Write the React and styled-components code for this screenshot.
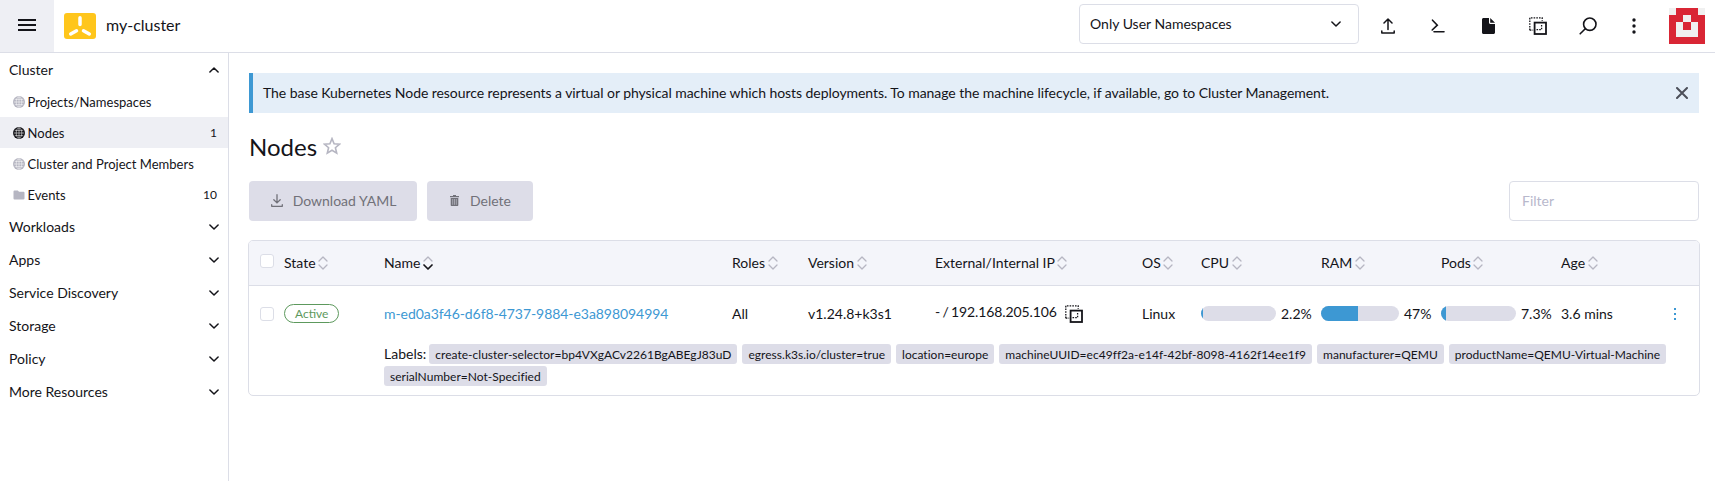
import React from 'react';
import styled, { createGlobalStyle } from 'styled-components';

const Global = createGlobalStyle`
  * { box-sizing: border-box; }
  body { margin: 0; background: #fff; color: #141419; font: 14px/20px Lato, sans-serif; }
  svg { display: block; flex: none; }
`;

const Page = styled.div`
  display: grid;
  grid-template: 53px 428px / 229px 1fr;
  width: 1715px;
  height: 481px;
  overflow: hidden;
`;

/* ---------- header ---------- */
const Header = styled.header`
  grid-column: 1 / -1;
  display: flex;
  align-items: center;
  border-bottom: 1px solid #dcdee7;
`;
const MenuButton = styled.div`
  width: 54px;
  height: 52px;
  display: flex;
  align-items: center;
  justify-content: center;
  padding-bottom: 2px;
  background: #eeeff4;
`;
const Logo = styled.div`
  width: 32px;
  height: 26px;
  margin: 0 10px;
  border-radius: 3px;
  background: #ffc61c;
`;
const ClusterName = styled.div`
  flex: 1;
  font-size: 16px;
  padding-bottom: 2px;
`;
const Select = styled.div`
  width: 280px;
  height: 40px;
  margin-bottom: 4px;
  padding: 0 17px 0 10px;
  display: flex;
  align-items: center;
  justify-content: space-between;
  border: 1px solid #dcdee7;
  border-radius: 4px;
`;
const Actions = styled.div`
  display: flex;
  margin-left: 4px;
`;
const Action = styled.div`
  width: ${(p) => p.$w || 50}px;
  height: 52px;
  display: flex;
  align-items: center;
  justify-content: center;
`;
const Avatar = styled.div`
  margin: 0 10px 0 15px;
`;

/* ---------- side navigation ---------- */
const Nav = styled.nav`
  border-right: 1px solid #dcdee7;
`;
const Group = styled.div`
  height: 33px;
  display: flex;
  align-items: center;
  justify-content: space-between;
  padding: 1px 9px 0 9px;
`;
const Item = styled.div`
  height: 31px;
  display: flex;
  align-items: center;
  gap: 2.5px;
  padding: 1px 11px 0 13px;
  background: ${(p) => (p.$active ? '#eeeff4' : 'transparent')};
  font-size: 13px;
  letter-spacing: 0.02px;
  svg { color: ${(p) => (p.$active ? '#141419' : '#b6b6c2')}; margin-bottom: 1px; }
`;
const ItemLabel = styled.span`
  flex: 1;
  white-space: nowrap;
`;
const Count = styled.span`
  font-size: 12px;
`;

/* ---------- main ---------- */
const Main = styled.main`
  padding: 20px 15px 0 19px;
`;
const Banner = styled.div`
  height: 40px;
  margin-left: 1px;
  margin-right: 1px;
  padding: 0 11px 0 10px;
  display: flex;
  align-items: center;
  justify-content: space-between;
  background: #e4eef8;
  border-left: 4px solid #3d98d3;
  letter-spacing: -0.058px;
`;
const Title = styled.h1`
  margin: 19px 0 0 1px;
  height: 30px;
  display: flex;
  align-items: center;
  gap: 6px;
  font-size: 24px;
  line-height: 30px;
  font-weight: 400;
  svg { margin-bottom: 3px; }
`;
const Toolbar = styled.div`
  display: flex;
  gap: 10px;
  margin: 19px 1px 0;
  height: 40px;
`;
const Button = styled.div`
  width: ${(p) => p.$w}px;
  display: flex;
  align-items: center;
  justify-content: center;
  gap: ${(p) => p.$gap}px;
  padding-left: 1px;
  border-radius: 4px;
  background: #dddde8;
  color: #717179;
  svg { margin-bottom: 1px; }
`;
const Filter = styled.div`
  width: 190px;
  margin-left: auto;
  padding: 9px 12px;
  border: 1px solid #dcdee7;
  border-radius: 4px;
  color: #b8b8cc;
`;

/* ---------- table ---------- */
const Table = styled.section`
  margin-top: 19px;
  height: 156px;
  border: 1px solid #dcdee7;
  border-radius: 5px;
  overflow: hidden;
`;
const Row = styled.div`
  display: grid;
  grid-template-columns: 24px 100px 348px 76px 127px 207px 59px 120px 120px 120px 105px 1fr;
  align-items: center;
  padding-left: 11px;
  height: ${(p) => p.$h}px;
  background: ${(p) => (p.$head ? '#f4f5fa' : '#fff')};
  border-bottom: ${(p) => (p.$head ? '1px solid #dcdee7' : '0')};
`;
const Cell = styled.div`
  display: flex;
  align-items: center;
  gap: ${(p) => p.$gap || 0}px;
  white-space: nowrap;
`;
const Address = styled.span`
  padding-bottom: 3px;
  letter-spacing: -0.1px;
  word-spacing: -1.2px;
`;
const AddressCell = styled(Cell)`
  padding-bottom: 1px;
`;
const Checkbox = styled.div`
  width: 14px;
  height: 14px;
  margin-bottom: ${(p) => p.$lift || 0}px;
  border: 1px solid #dcdee7;
  border-radius: 3px;
  background: #fff;
`;
const Badge = styled.span`
  height: 19px;
  margin-bottom: 1px;
  padding: 0 10px;
  border: 1px solid #5d995d;
  border-radius: 10px;
  color: #5d995d;
  font-size: 12px;
  line-height: 18px;
`;
const Link = styled.a`
  color: #3d98d3;
  letter-spacing: -0.06px;
`;
const Meter = styled.div`
  width: ${(p) => p.$w}px;
  height: 15px;
  margin-bottom: 1px;
  border-radius: 8px;
  overflow: hidden;
  background: #dddde8;
`;
const Fill = styled.div`
  height: 100%;
  background: #3d98d3;
`;
const Labels = styled.div`
  display: flex;
  flex-wrap: wrap;
  gap: 2px 5px;
  padding: 2px 20px 0 135px;
`;
const LabelTitle = styled.span`
  line-height: 19px;
  margin-right: -2px;
`;
const Tag = styled.span`
  height: 20px;
  padding: 0 6px;
  border-radius: 3px;
  background: #dddde8;
  font-size: 12px;
  letter-spacing: 0.022px;
  line-height: 21px;
  white-space: nowrap;
`;

/* ---------- icons ---------- */
const Chevron = ({ up }) => (
  <svg width="10" height="6" viewBox="0 0 10 6" fill="none" stroke="currentColor" strokeWidth="1.5" strokeLinecap="round" strokeLinejoin="round">
    <path d={up ? 'M.9 5 5 1l4.1 4' : 'M.9 1 5 5l4.1-4'} />
  </svg>
);
const Sort = ({ active }) => (
  <svg width="10" height="14" viewBox="0 0 10 14" fill="none" strokeWidth="1.3" strokeLinecap="round" strokeLinejoin="round">
    <path d="M1 5l4-4 4 4" stroke="#b6b6c2" />
    <path d="M1 9l4 4 4-4" stroke={active ? '#141419' : '#b6b6c2'} strokeWidth={active ? 1.7 : 1.3} />
  </svg>
);
const Globe = () => (
  <svg width="12" height="12" viewBox="0 0 12 12">
    <circle cx="6" cy="6" r="6" fill="currentColor" />
    <g fill="none" stroke="#fff" strokeOpacity=".75" strokeWidth=".7">
      <path d="M6 .8v10.4M.8 6h10.4M1.8 3.4h8.4M1.8 8.6h8.4" />
      <ellipse cx="6" cy="6" rx="2.8" ry="5.2" />
    </g>
  </svg>
);
const Folder = () => (
  <svg width="12" height="12" viewBox="0 0 12 12">
    <path d="M1.4 1.5h3.4L6 2.8h4.6c.5 0 .9.4.9.9v5.9c0 .5-.4.9-.9.9H1.4c-.5 0-.9-.4-.9-.9V2.4c0-.5.4-.9.9-.9z" fill="currentColor" />
  </svg>
);
const Copy = () => (
  <svg width="18" height="18" viewBox="0 0 18 18" fill="none" stroke="#141419">
    <path d="M.8 13.2V.8h12.4v3" strokeWidth="1.3" strokeDasharray="1.6 1.1" />
    <path d="M.8 13.2h3.4M7.5 12.6h5.1V7.5" strokeWidth="1.3" strokeDasharray="1.6 1.1" />
    <rect x="5.6" y="5.6" width="11.4" height="11.4" strokeWidth="1.8" />
  </svg>
);

const sections = ['Workloads', 'Apps', 'Service Discovery', 'Storage', 'Policy', 'More Resources'];
const columns = ['State', 'Name', 'Roles', 'Version', 'External/Internal IP', 'OS', 'CPU', 'RAM', 'Pods', 'Age'];
const tags = [
  'create-cluster-selector=bp4VXgACv2261BgABEgJ83uD',
  'egress.k3s.io/cluster=true',
  'location=europe',
  'machineUUID=ec49ff2a-e14f-42bf-8098-4162f14ee1f9',
  'manufacturer=QEMU',
  'productName=QEMU-Virtual-Machine',
  'serialNumber=Not-Specified',
];
const usage = [
  { value: 2.2, width: 75 },
  { value: 47, width: 78 },
  { value: 7.3, width: 75 },
];

export default function App() {
  return (
    <Page>
      <Global />
      <Header>
        <MenuButton>
          <svg width="18" height="12" viewBox="0 0 18 12" fill="#141419">
            <path d="M0 0h18v2H0zM0 5h18v2H0zM0 10h18v2H0z" />
          </svg>
        </MenuButton>
        <Logo>
          <svg width="32" height="26" viewBox="0 0 32 26" stroke="#fff" strokeWidth="3.5" strokeLinecap="round">
            <path d="M16 4.8v6.6M12.5 17.8l-5.8 3.2M19.5 17.8l5.8 3.2" />
          </svg>
        </Logo>
        <ClusterName>my-cluster</ClusterName>
        <Select>
          Only User Namespaces
          <Chevron />
        </Select>
        <Actions>
          <Action>
            <svg width="14" height="16" viewBox="0 0 14 16" fill="none" stroke="#141419" strokeWidth="1.5" strokeLinecap="round" strokeLinejoin="round">
              <path d="M7 11.5V1M3 5l4-4 4 4M.8 13v2h12.4v-2" />
            </svg>
          </Action>
          <Action>
            <svg width="14" height="14" viewBox="0 0 14 14" fill="none" stroke="#141419" strokeWidth="1.6" strokeLinecap="round">
              <path d="M1.5 1.2 6.3 6.2 1.2 11M3 12.8h10" />
            </svg>
          </Action>
          <Action>
            <svg width="13" height="16" viewBox="0 0 13 16" fill="#141419">
              <path d="M1.5 0H7v4.5C7 5.3 7.6 6 8.4 6H13v8.5c0 .8-.7 1.5-1.5 1.5h-10C.7 16 0 15.3 0 14.5v-13C0 .7.7 0 1.5 0zM8.2 0 13 4.8H8.2z" />
            </svg>
          </Action>
          <Action><Copy /></Action>
          <Action>
            <svg width="18" height="18" viewBox="0 0 18 18" fill="none" stroke="#141419" strokeWidth="1.6" strokeLinecap="round">
              <circle cx="10.8" cy="7.2" r="6.2" />
              <path d="M6.3 11.7 1.2 16.8" />
            </svg>
          </Action>
          <Action $w={41}>
            <svg width="4" height="16" viewBox="0 0 4 16" fill="#141419">
              <circle cx="2" cy="2" r="1.7" /><circle cx="2" cy="8" r="1.7" /><circle cx="2" cy="14" r="1.7" />
            </svg>
          </Action>
        </Actions>
        <Avatar>
          <svg width="36" height="36" viewBox="0 0 36 36" shapeRendering="crispEdges">
            <path fill="#d92635" d="M0 0h36v36H0z" />
            <path fill="#f0f0f0" d="M0 0h7v7H0zM29 0h7v7h-7zM14 7h8v7h-8zM7 14h22v15H7z" />
            <path fill="#d92635" d="M14 14h8v8h-8z" />
          </svg>
        </Avatar>
      </Header>

      <Nav>
        <Group>Cluster<Chevron up /></Group>
        <Item><Globe /><ItemLabel>Projects/Namespaces</ItemLabel></Item>
        <Item $active><Globe /><ItemLabel>Nodes</ItemLabel><Count>1</Count></Item>
        <Item><Globe /><ItemLabel>Cluster and Project Members</ItemLabel></Item>
        <Item><Folder /><ItemLabel>Events</ItemLabel><Count>10</Count></Item>
        {sections.map((name) => (
          <Group key={name}>{name}<Chevron /></Group>
        ))}
      </Nav>

      <Main>
        <Banner>
          The base Kubernetes Node resource represents a virtual or physical machine which hosts deployments. To manage the machine lifecycle, if available, go to Cluster Management.
          <svg width="12" height="12" viewBox="0 0 12 12" stroke="#4c4f59" strokeWidth="2" strokeLinecap="round">
            <path d="M1 1l10 10M11 1 1 11" />
          </svg>
        </Banner>
        <Title>
          Nodes
          <svg width="18" height="18" viewBox="0 0 18 18" fill="none" stroke="#b6b6c2" strokeWidth="1.6">
            <path d="M9 1.6l2.1 5.1 5.5.4-4.2 3.6 1.3 5.4L9 13.2l-4.7 2.9 1.3-5.4L1.4 7.100l5.500-.4z" />
          </svg>
        </Title>
        <Toolbar>
          <Button $w={168} $gap={10}>
            <svg width="12" height="13" viewBox="0 0 12 13" fill="none" stroke="currentColor" strokeWidth="1.3" strokeLinecap="round" strokeLinejoin="round">
              <path d="M6 .7v8.2M2.8 5.7 6 8.9l3.2-3.2M.7 10.7v1.6h10.6v-1.6" />
            </svg>
            Download YAML
          </Button>
          <Button $w={106} $gap={11}>
            <svg width="9" height="11" viewBox="0 0 9 11" fill="currentColor">
              <path d="M3 0h3v1h3v1.2H0V1h3zM.7 3h7.6v7c0 .6-.4 1-1 1H1.7c-.6 0-1-.4-1-1z" />
              <path d="M2.7 4v5.8M4.5 4v5.8M6.3 4v5.8" stroke="#dddde8" strokeWidth=".5" />
            </svg>
            Delete
          </Button>
          <Filter>Filter</Filter>
        </Toolbar>

        <Table>
          <Row $head $h={45}>
            <Checkbox $lift={4} />
            {columns.map((name) => (
              <Cell key={name} $gap={2.5}>{name}<Sort active={name === 'Name'} /></Cell>
            ))}
          </Row>
          <Row $h={56}>
            <Checkbox />
            <Cell><Badge>Active</Badge></Cell>
            <Cell><Link>m-ed0a3f46-d6f8-4737-9884-e3a898094994</Link></Cell>
            <Cell>All</Cell>
            <Cell>v1.24.8+k3s1</Cell>
            <AddressCell $gap={8}><Address>- / 192.168.205.106</Address><Copy /></AddressCell>
            <Cell>Linux</Cell>
            {usage.map(({ value, width }) => (
              <Cell key={value} $gap={5}>
                <Meter $w={width}><Fill style={{ width: `${value}%` }} /></Meter>
                {value}%
              </Cell>
            ))}
            <Cell>3.6 mins</Cell>
            <Cell>
              <svg width="18" height="14" viewBox="0 0 18 14" fill="#3d98d3">
                <path d="M8 1h2v2H8zM8 6h2v2H8zM8 11h2v2H8z" />
              </svg>
            </Cell>
          </Row>
          <Labels>
            <LabelTitle>Labels:</LabelTitle>
            {tags.map((tag) => <Tag key={tag}>{tag}</Tag>)}
          </Labels>
        </Table>
      </Main>
    </Page>
  );
}
